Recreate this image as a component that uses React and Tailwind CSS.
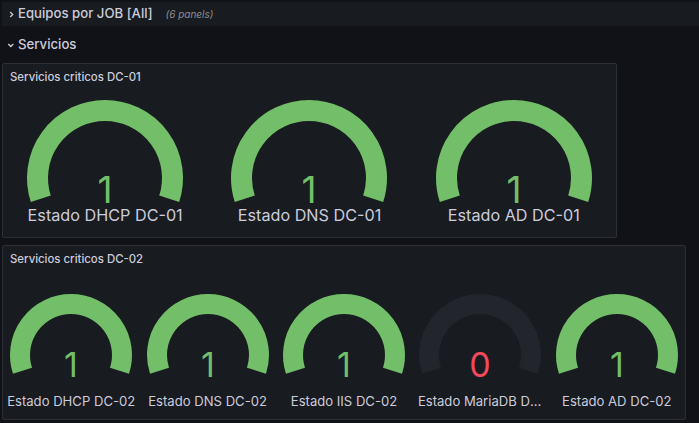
import React from "react";

function arcPath(cx, cy, r) {
  const a1 = (162 * Math.PI) / 180;
  const a2 = (18 * Math.PI) / 180;
  const x1 = cx + r * Math.cos(a1);
  const y1 = cy + r * Math.sin(a1);
  const x2 = cx + r * Math.cos(a2);
  const y2 = cy + r * Math.sin(a2);
  return `M ${x1} ${y1} A ${r} ${r} 0 1 1 ${x2} ${y2}`;
}

function Gauge({ w, h, cy, r, sw, value, ok, fontSize, baseline }) {
  const cx = w / 2;
  return (
    <svg width={w} height={h} viewBox={`0 0 ${w} ${h}`} className="block">
      <path d={arcPath(cx, cy, r)} fill="none" stroke={ok ? "#73bf69" : "#22252b"} strokeWidth={sw} />
      <text
        x={cx}
        y={baseline}
        textAnchor="middle"
        fill={ok ? "#73bf69" : "#f2495c"}
        style={{ fontFamily: "Inter, sans-serif", fontSize }}
      >
        {value}
      </text>
    </svg>
  );
}

const p1 = ["Estado DHCP DC-01", "Estado DNS DC-01", "Estado AD DC-01"];
const p2 = [
  ["Estado DHCP DC-02", 1, "max-w-[134px]"],
  ["Estado DNS DC-02", 1, "max-w-[134px]"],
  ["Estado IIS DC-02", 1, "max-w-[134px]"],
  ["Estado MariaDB DC-02", 0, "max-w-[125px]"],
  ["Estado AD DC-02", 1, "max-w-[134px]"],
];

export default function App() {
  return (
    <div className="w-[699px] h-[423px] overflow-hidden bg-[#111217] text-[#ccccdc] font-['Inter',sans-serif]">
      <div className="pt-[2px] pl-[2px]">
        <div className="h-[24px] bg-[#181b1f] flex items-center">
          <svg width="8" height="24" viewBox="0 0 8 24" className="ml-[6px]">
            <path d="M2.2 10 L4.7 12.5 L2.2 15" fill="none" stroke="#ccccdc" strokeWidth="1.3" />
          </svg>
          <span className="text-[13.2px] font-medium leading-none ml-[2px]">Equipos por JOB [All]</span>
          <span className="text-[10px] italic text-[#8e8e94] ml-[13px] leading-none">(6 panels)</span>
        </div>
      </div>
      <div className="h-[37px] flex items-center">
        <svg width="10" height="16" viewBox="0 0 10 16" className="ml-[6px]">
          <path d="M2.3 7 L4.8 9.5 L7.3 7" fill="none" stroke="#ccccdc" strokeWidth="1.3" />
        </svg>
        <span className="text-[13.2px] font-medium leading-none ml-[2px]">Servicios</span>
      </div>
      <div className="ml-[2px] w-[615px] h-[175px] border border-[#2c2f35] rounded-[2px] bg-[#181b1f] flex flex-col">
        <div className="h-[27px] flex items-center pl-[7px] text-[11.4px] font-medium">Servicios criticos DC-01</div>
        <div className="grid grid-cols-3">
          {p1.map((l) => (
            <div key={l} className="flex flex-col items-center">
              <Gauge w={200} h={114} cy={87} r={67.5} sw={21} value="1" ok fontSize={37} baseline={112} />
              <div className="h-[20px] leading-[20px] text-[16.2px] whitespace-nowrap">{l}</div>
            </div>
          ))}
        </div>
      </div>
      <div className="ml-[2px] mt-[7px] w-[684px] h-[175px] border border-[#2c2f35] rounded-[2px] bg-[#181b1f] flex flex-col">
        <div className="h-[27px] flex items-center pl-[7px] text-[11.4px] font-medium">Servicios criticos DC-02</div>
        <div className="grid grid-cols-5">
          {p2.map(([l, v, mw]) => (
            <div key={l} className="flex flex-col items-center min-w-0">
              <Gauge w={134} h={118} cy={82} r={51} sw={20} value={String(v)} ok={v === 1} fontSize={34} baseline={104} />
              <div className={`h-[20px] leading-[20px] text-[13.1px] text-center truncate ${mw}`}>{l}</div>
            </div>
          ))}
        </div>
      </div>
    </div>
  );
}
